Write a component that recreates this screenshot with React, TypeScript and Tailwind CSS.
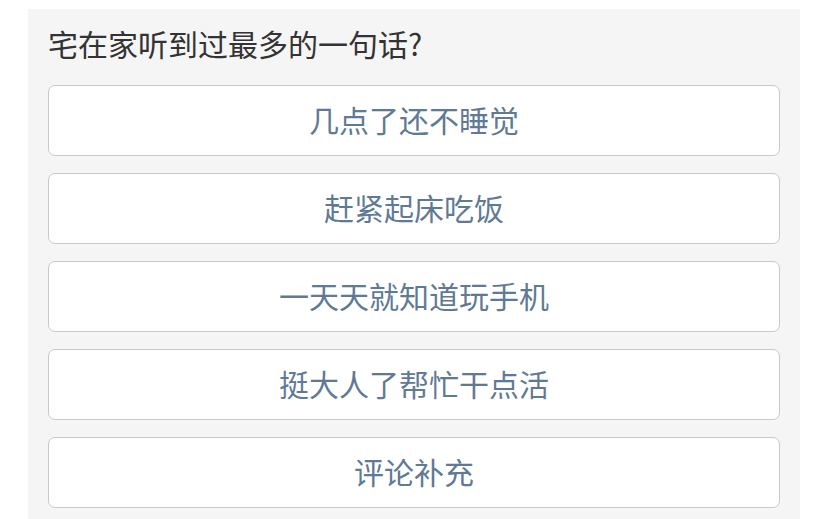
import React from "react";

const options = [
  "几点了还不睡觉",
  "赶紧起床吃饭",
  "一天天就知道玩手机",
  "挺大人了帮忙干点活",
  "评论补充",
];

export default function App() {
  return (
    <div
      className="h-[519px] w-[828px] overflow-hidden bg-white pl-[28px] pt-[9px]"
      style={{ fontFamily: '"Noto Sans CJK SC", "Noto Sans", sans-serif' }}
    >
      <div className="h-full w-[772px] bg-[#f5f5f5] px-5 pt-4">
        <h1 className="mb-6 text-[30px] leading-[36px] font-normal text-[#333333]">
          宅在家听到过最多的一句话?
        </h1>
        <div className="flex flex-col gap-[17px]">
          {options.map((opt) => (
            <button
              key={opt}
              className="flex h-[71px] w-full items-center justify-center rounded-[7px] border border-[#c9c9c9] bg-white pb-[3px] text-[30px] font-normal text-[#5f7a96]"
            >
              {opt}
            </button>
          ))}
        </div>
      </div>
    </div>
  );
}
